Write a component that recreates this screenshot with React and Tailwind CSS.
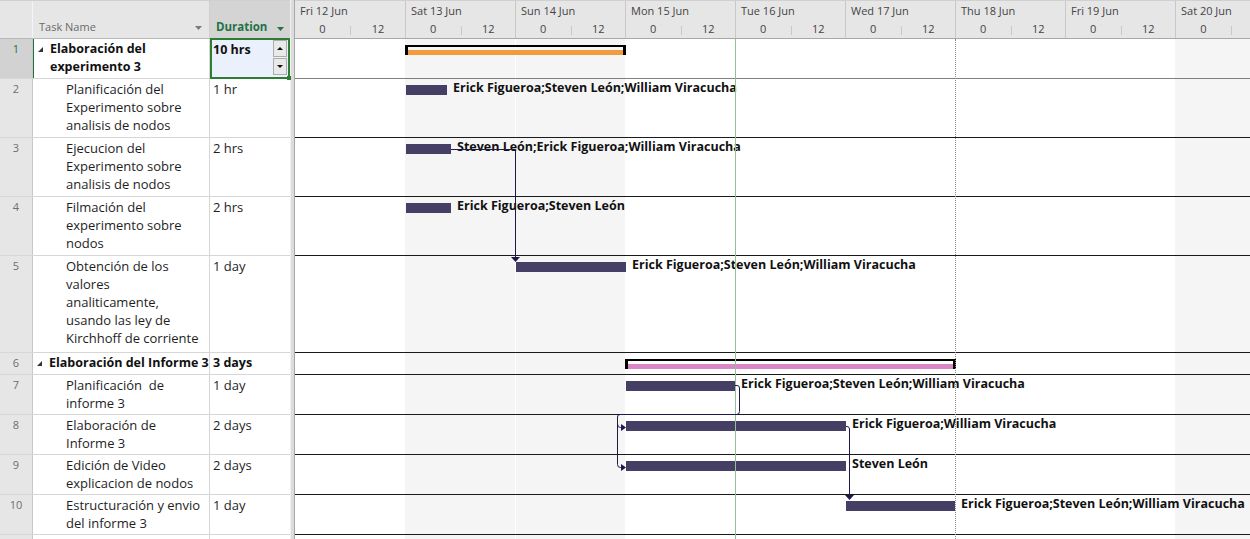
import React from "react";

const rows = [
  { n: 1, lines: ["Elaboración del", "experimento 3"], dur: "10 hrs", h: 40, summary: true, sel: true },
  { n: 2, lines: ["Planificación del", "Experimento sobre", "analisis de nodos"], dur: "1 hr", h: 59 },
  { n: 3, lines: ["Ejecucion del", "Experimento sobre", "analisis de nodos"], dur: "2 hrs", h: 59 },
  { n: 4, lines: ["Filmación del", "experimento sobre", "nodos"], dur: "2 hrs", h: 59 },
  { n: 5, lines: ["Obtención de los", "valores", "analiticamente,", "usando las ley de", "Kirchhoff de corriente"], dur: "1 day", h: 97 },
  { n: 6, lines: ["Elaboración del Informe 3"], dur: "3 days", h: 22, summary: true },
  { n: 7, lines: ["Planificación\u00a0 de", "informe 3"], dur: "1 day", h: 40 },
  { n: 8, lines: ["Elaboración de", "Informe 3"], dur: "2 days", h: 40 },
  { n: 9, lines: ["Edición de Video", "explicacion de nodos"], dur: "2 days", h: 40 },
  { n: 10, lines: ["Estructuración y envio", "del informe 3"], dur: "1 day", h: 40 },
];

const bars = [
  { type: "sum", left: 110, width: 221, color: "bg-[#f29b3c]" },
  { type: "task", left: 111, width: 41, label: "Erick Figueroa;Steven León;William Viracucha" },
  { type: "task", left: 111, width: 45, label: "Steven León;Erick Figueroa;William Viracucha" },
  { type: "task", left: 111, width: 45, label: "Erick Figueroa;Steven León" },
  { type: "task", left: 221, width: 110, label: "Erick Figueroa;Steven León;William Viracucha" },
  { type: "sum", left: 330, width: 331, color: "bg-[#d986c6]" },
  { type: "task", left: 331, width: 109, label: "Erick Figueroa;Steven León;William Viracucha" },
  { type: "task", left: 331, width: 220, label: "Erick Figueroa;William Viracucha" },
  { type: "task", left: 331, width: 220, label: "Steven León" },
  { type: "task", left: 551, width: 109, label: "Erick Figueroa;Steven León;William Viracucha" },
];

const days = ["Fri 12 Jun", "Sat 13 Jun", "Sun 14 Jun", "Mon 15 Jun", "Tue 16 Jun", "Wed 17 Jun", "Thu 18 Jun", "Fri 19 Jun", "Sat 20 Jun"];

function DownTri({ className }) {
  return (
    <svg width="7" height="4" viewBox="0 0 7 4" className={className}>
      <polygon points="0,0 7,0 3.5,4" fill="currentColor" />
    </svg>
  );
}

function SummaryTri() {
  return (
    <svg width="5" height="5" viewBox="0 0 5 5" className="shrink-0">
      <polygon points="0,5 5,5 5,0" fill="#333" />
    </svg>
  );
}

function Spinner() {
  return (
    <div className="flex flex-col gap-[1px]">
      <div className="w-[14px] h-[17px] bg-[#e9e9e9] border border-[#adadad] flex items-center justify-center">
        <svg width="6" height="3" viewBox="0 0 6 3"><polygon points="0,3 6,3 3,0" fill="#111" /></svg>
      </div>
      <div className="w-[14px] h-[17px] bg-[#e9e9e9] border border-[#adadad] flex items-center justify-center">
        <svg width="6" height="3" viewBox="0 0 6 3"><polygon points="0,0 6,0 3,3" fill="#111" /></svg>
      </div>
    </div>
  );
}

function LeftTable() {
  return (
    <div className="w-[290px] shrink-0 flex flex-col font-['Open_Sans',sans-serif]">
      {/* header */}
      <div className="h-[39px] shrink-0 flex border-t border-[#d0d0d0] border-b border-b-[#b8b8b8] bg-[#e6e6e6]">
        <div className="w-[33px] border-r border-[#f4f4f4]" />
        <div className="w-[177px] flex items-end justify-between pl-[6px] pr-[7px] pb-[2px] border-r border-[#d0d0d0]">
          <span className="text-[11px] leading-[18px] text-[#6b6b6b]">Task Name</span>
          <DownTri className="text-[#7a7a7a] mb-[6px]" />
        </div>
        <div className="w-[80px] flex items-end justify-between pl-[6px] pr-[6px] pb-[2px] bg-[#d4d4d4]">
          <span className="text-[11.5px] leading-[18px] font-bold text-[#217346]">Duration</span>
          <DownTri className="text-[#217346] mb-[5px]" />
        </div>
      </div>
      {rows.map((r) => (
        <div key={r.n} className="flex shrink-0 border-b border-[#d6d6d6]" style={{ height: r.h }}>
          <div
            className={
              "w-[33px] shrink-0 text-center text-[11px] leading-[18px] pt-[1px] border-r border-[#c8c8c8] " +
              (r.sel ? "bg-[#d2d2d2] text-[#217346]" : "bg-[#e6e6e6] text-[#6e6e6e]")
            }
          >
            {r.n}
          </div>
          <div
            className={
              "w-[177px] shrink-0 border-r border-[#d6d6d6] pt-[1px] " +
              (r.summary ? "pl-[4px]" : "pl-[33px]") +
              (r.sel ? " border-l border-l-[#217346]" : "")
            }
          >
            {r.summary ? (
              <div className="flex">
                <div className="w-[12px] flex items-start pt-[7px]">
                  <SummaryTri />
                </div>
                <div className="text-[12.5px] leading-[18px] font-bold text-[#111] whitespace-nowrap">
                  {r.lines.map((l, i) => (
                    <div key={i}>{l}</div>
                  ))}
                </div>
              </div>
            ) : (
              <div className="text-[13px] leading-[18px] text-[#1e1e1e] whitespace-nowrap">
                {r.lines.map((l, i) => (
                  <div key={i}>{l}</div>
                ))}
              </div>
            )}
          </div>
          {r.sel ? (
            <div className="w-[80px] shrink-0 relative border-2 border-[#2f7d32] bg-[#eaf0fc] flex justify-between pl-[1px] pr-[1px] -mt-[1px] h-[41px]">
              <span className="text-[12.5px] leading-[18px] font-bold text-[#111] pt-[1px]">{r.dur}</span>
              <Spinner />
              <div className="absolute -right-[3px] -bottom-[3px] w-[4px] h-[4px] bg-[#2f7d32]" />
            </div>
          ) : (
            <div
              className={
                "w-[80px] shrink-0 pl-[3px] pt-[1px] leading-[18px] whitespace-nowrap " +
                (r.summary ? "text-[12.5px] font-bold text-[#111]" : "text-[13px] text-[#1e1e1e]")
              }
            >
              {r.dur}
            </div>
          )}
        </div>
      ))}
      <div className="flex flex-1">
        <div className="w-[33px] bg-[#e6e6e6] border-r border-[#c8c8c8]" />
        <div className="w-[177px] border-r border-[#d6d6d6]" />
        <div className="w-[80px]" />
      </div>
    </div>
  );
}

function ChartHeader() {
  return (
    <div className="h-[39px] shrink-0 flex border-t border-[#d0d0d0] border-b border-b-[#a8a8a8] bg-[#e6e6e6] overflow-hidden font-['Open_Sans',sans-serif] text-[11px] text-[#444]">
      {days.map((d, i) => (
        <div key={d} className={"w-[110px] shrink-0 flex flex-col " + (i > 0 ? "border-l border-[#c8c8c8]" : "")}>
          <div className="h-[19px] pl-[5px] leading-[19px] whitespace-nowrap">{d}</div>
          <div className="flex-1 flex items-center">
            <span className="w-[55px] text-center leading-[16px]">0</span>
            <div className="w-px h-[9px] bg-[#c8c8c8] self-end mb-[3px]" />
            {i < days.length - 1 && <span className="w-[54px] text-center leading-[16px]">12</span>}
          </div>
        </div>
      ))}
    </div>
  );
}

function SummaryBar({ left, width, color }) {
  return (
    <div className="absolute top-[6px] h-[10px] flex" style={{ left, width }}>
      <div className="w-[3px] h-full bg-black" />
      <div className="flex-1 flex flex-col">
        <div className="h-[2px] bg-black" />
        <div className="h-[3px]" />
        <div className={"h-[5px] " + color} />
      </div>
      <div className="w-[3px] h-full bg-black" />
    </div>
  );
}

function ChartBody() {
  return (
    <div className="relative flex-1 flex flex-col overflow-hidden font-['Open_Sans',sans-serif]">
      {/* weekend shading */}
      <div className="absolute top-0 bottom-0 left-[110px] w-[110px] bg-[#f5f5f5]" />
      <div className="absolute top-0 bottom-0 left-[221px] w-[109px] bg-[#f5f5f5]" />
      <div className="absolute top-0 bottom-0 left-[880px] w-[80px] bg-[#f5f5f5]" />
      {rows.map((r, i) => {
        const b = bars[i];
        return (
          <div
            key={r.n}
            className={"relative shrink-0 border-b " + (i === 0 ? "border-[#808080]" : "border-[#1a1a1a]")}
            style={{ height: r.h }}
          >
            {b.type === "sum" ? (
              <SummaryBar left={b.left} width={b.width} color={b.color} />
            ) : (
              <>
                <div className="absolute top-[6px] h-[10px] bg-[#463f65]" style={{ left: b.left, width: b.width }} />
                <div
                  className="absolute top-0 text-[12.5px] leading-[18px] font-bold text-[#111] whitespace-nowrap"
                  style={{ left: b.left + b.width + 6 }}
                >
                  {b.label}
                </div>
              </>
            )}
          </div>
        );
      })}
      {/* status / finish lines */}
      <div className="absolute top-0 bottom-0 left-[440px] w-px bg-[#93c193]" />
      <div className="absolute top-0 bottom-0 left-[660px] w-0 border-l border-dotted border-[#8a8a8a]" />
      {/* dependency links */}
      <svg className="absolute top-0 left-0 pointer-events-none" width="955" height="501">
        <g stroke="#1d1948" strokeWidth="1" fill="none">
          <path d="M156 110.5 H220.5 V219" />
          <path d="M440 346.5 H442 Q444.5 346.5 444.5 349 V372.5 Q444.5 375.5 441.5 375.5 H325 Q322.5 375.5 322.5 378 V425.5 Q322.5 428.5 325.5 428.5 H327" />
          <path d="M322.5 385 Q322.5 388.5 325.5 388.5 H327" />
          <path d="M551 387.5 H552 Q554.5 387.5 554.5 390 V457" />
        </g>
        <g fill="#1d1948">
          <polygon points="216,218 225,218 220.5,223" />
          <polygon points="326,385 326,392 331,388.5" />
          <polygon points="326,425 326,432 331,428.5" />
          <polygon points="550,456 559,456 554.5,461" />
        </g>
      </svg>
    </div>
  );
}

export default function App() {
  return (
    <div className="w-[1250px] h-[539px] flex overflow-hidden bg-white">
      <LeftTable />
      <div className="w-[5px] shrink-0 bg-[#dcdcdc] border-l border-[#f0f0f0] border-r border-r-[#a8a8a8]" />
      <div className="flex-1 flex flex-col min-w-0">
        <ChartHeader />
        <ChartBody />
      </div>
    </div>
  );
}
